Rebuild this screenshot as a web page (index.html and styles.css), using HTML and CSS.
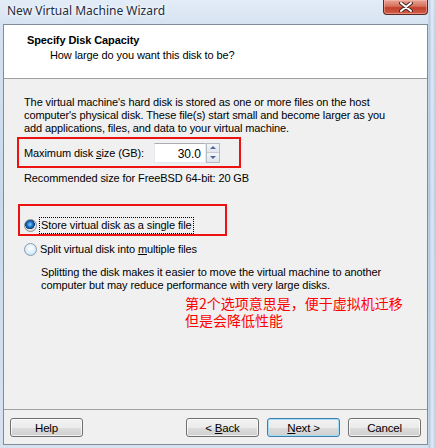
FILE: index.html
```html
<!DOCTYPE html>
<html>
<head>
  <meta name="viewport" content="width=device-width, initial-scale=1">
  <link rel="stylesheet" href="styles.css">
</head>
<body>

  <div class="window">
    <!-- Title bar -->
    <div class="titlebar">
      <span class="title">New Virtual Machine Wizard</span>
      <button class="close" aria-label="Close">
        <svg width="14" height="10" viewBox="0 0 14 10">
          <path d="M2 1 L12 9 M12 1 L2 9" stroke="#4a2a24" stroke-width="4" stroke-linecap="round"/>
          <path d="M2 1 L12 9 M12 1 L2 9" stroke="#ffffff" stroke-width="2" stroke-linecap="round"/>
        </svg>
      </button>
    </div>

    <!-- Dialog client area -->
    <div class="client">
      <div class="header">
        <h1>Specify Disk Capacity</h1>
        <p>How large do you want this disk to be?</p>
      </div>

      <div class="content">
        <p class="intro">The virtual machine's hard disk is stored as one or more files on the host<br>
          computer's physical disk. These file(s) start small and become larger as you<br>
          add applications, files, and data to your virtual machine.</p>

        <div class="mark mark-size">
          <div class="size-row">
            <span class="size-label">Maximum disk <u>s</u>ize (GB):</span>
            <div class="spin">
              <span class="spin-value">30.0</span>
              <span class="spin-btns">
                <span class="spin-btn up"></span>
                <span class="spin-btn down"></span>
              </span>
            </div>
          </div>
        </div>

        <p class="recommend">Recommended size for FreeBSD 64-bit: 20 GB</p>

        <div class="mark mark-radio">
          <label class="radio">
            <span class="dot checked"></span>
            <span class="focus">Store virtual disk as a single file</span>
          </label>
        </div>

        <label class="radio radio-split">
          <span class="dot"></span>
          <span>Split virtual disk into <u>m</u>ultiple files</span>
        </label>

        <p class="hint">Splitting the disk makes it easier to move the virtual machine to another<br>
          computer but may reduce performance with very large disks.</p>

        <p class="note">第2个选项意思是，便于虚拟机迁移<br>但是会降低性能</p>
      </div>

      <div class="footer">
        <button class="btn">Help</button>
        <span class="spacer"></span>
        <button class="btn">&lt; <u>B</u>ack</button>
        <button class="btn btn-default"><u>N</u>ext &gt;</button>
        <button class="btn">Cancel</button>
      </div>
    </div>
  </div>

</body>
</html>
```

FILE: styles.css
```css
/* =====================
   BASE
   ===================== */
body {
  margin: 0;
  width: 436px;
  height: 448px;
  overflow: hidden;
  background: #c8d8ea;
}
* {
  box-sizing: border-box;
}
p, h1 {
  margin: 0;
}
u {
  text-decoration: underline;
  text-underline-offset: 1px;
}

/* =====================
   WINDOW FRAME
   ===================== */
.window {
  width: 436px;
  height: 448px;
  padding: 0 8px 3px 3px;
  display: flex;
  flex-direction: column;
  background:
    linear-gradient(90deg, rgba(255,255,255,0) 0, rgba(255,255,255,0) 428px, rgba(150,175,205,0.55) 429px, rgba(230,238,248,0.7) 432px, rgba(170,190,215,0.6) 436px),
    linear-gradient(180deg, #e3ecf7 0, #d4e1f0 30px, #c9d9eb 200px, #d6e2ef 448px);
}

.titlebar {
  height: 24px;
  flex-shrink: 0;
  display: flex;
  align-items: flex-start;
  margin-right: -8px;
}
.title {
  font-family: "Noto Sans", "Open Sans", sans-serif;
  font-size: 12px;
  line-height: 17px;
  color: #1e2d3d;
  padding: 2px 0 0 4px;
  flex: 1;
  text-shadow: 0 0 6px #ffffff, 0 0 3px #ffffff;
}
.close {
  width: 45px;
  height: 15px;
  margin-right: 8px;
  padding: 0;
  border: 1px solid #5a2a22;
  border-top: none;
  border-radius: 0 0 4px 4px;
  background: linear-gradient(180deg, #e8a595 0, #d6705c 45%, #c2402a 55%, #d0604a 100%);
  box-shadow: inset 0 0 0 1px rgba(255,200,190,0.45);
  display: flex;
  align-items: center;
  justify-content: center;
}

/* =====================
   CLIENT AREA
   ===================== */
.client {
  flex: 1;
  display: flex;
  flex-direction: column;
  border: 1px solid #7f8c99;
  background: #f0f0f0;
  font-family: "Liberation Sans", Arial, sans-serif;
  font-size: 11px;
  letter-spacing: -0.1px;
  color: #000;
}

.header {
  height: 54px;
  flex-shrink: 0;
  background: #fff;
  border-bottom: 1px solid #a0a0a0;
  padding: 8px 0 0 23px;
}
.header h1 {
  font-size: 11px;
  font-weight: 700;
  line-height: 15px;
}
.header p {
  line-height: 15px;
  padding-left: 23px;
}

.content {
  flex: 1;
  padding: 17px 20px 0 20px;
}
.intro {
  line-height: 13px;
}

/* Red annotation boxes */
.mark {
  border: 2px solid #ee1111;
}
.mark-size {
  width: 224px;
  height: 31px;
  margin: 2px 0 0 -7px;
  padding-left: 5px;
  display: flex;
  align-items: center;
}
.size-row {
  display: flex;
  align-items: center;
}
.size-label {
  width: 130px;
}

/* Spin box */
.spin {
  display: flex;
  height: 20px;
}
.spin-value {
  width: 52px;
  height: 20px;
  background: #fff;
  border: 1px solid #e3e9ef;
  border-top-color: #abadb3;
  text-align: right;
  padding: 3px 4px 0 0;
  font-size: 12px;
  letter-spacing: 0;
}
.spin-btns {
  width: 14px;
  display: flex;
  flex-direction: column;
  border: 1px solid #b4bcc6;
  background: #e9eef4;
}
.spin-btn {
  flex: 1;
  display: flex;
  align-items: center;
  justify-content: center;
  background: linear-gradient(180deg, #f4f6f9, #dfe5ec);
}
.spin-btn.up {
  border-bottom: 1px solid #c3cad3;
}
.spin-btn::after {
  content: "";
  border-left: 3px solid transparent;
  border-right: 3px solid transparent;
}
.spin-btn.up::after {
  border-bottom: 3px solid #4d6a96;
}
.spin-btn.down::after {
  border-top: 3px solid #4d6a96;
}

.recommend {
  line-height: 13px;
  margin-top: 4px;
}

/* Radio buttons */
.mark-radio {
  width: 209px;
  height: 32px;
  margin: 19px 0 0 -6px;
  padding: 11px 0 0 4px;
}
.radio {
  display: flex;
  align-items: center;
  gap: 3px;
  height: 16px;
}
.radio-split {
  margin-top: 5px;
}
.dot {
  width: 13px;
  height: 13px;
  border-radius: 50%;
  border: 1px solid #8e9aa8;
  background: radial-gradient(circle at 50% 40%, #ffffff 0, #dff0fc 50%, #a9d3f2 100%);
  flex-shrink: 0;
}
.dot.checked {
  border-color: #8f8f8f;
  background:
    radial-gradient(circle at 45% 40%, #8fd0ff 0, #1e73c8 30%, #0a3f78 52%, transparent 56%),
    radial-gradient(circle, #f4f4f4 0, #d6d6d6 100%);
}
.focus {
  outline: 1px dotted #000;
  outline-offset: 0;
  padding: 0 1px;
  line-height: 15px;
}
.hint {
  line-height: 13px;
  margin: 9px 0 0 17px;
}
.note {
  font-family: "Noto Sans CJK SC", sans-serif;
  font-size: 14px;
  line-height: 17px;
  letter-spacing: 0;
  color: #ff0000;
  margin: 3px 0 0 161px;
}

/* =====================
   FOOTER BUTTONS
   ===================== */
.footer {
  height: 35px;
  flex-shrink: 0;
  border-top: 1px solid #a0a0a0;
  padding: 8px 6px 0 6px;
  display: flex;
  align-items: flex-start;
  gap: 8px;
}
.spacer {
  flex: 1;
}
.btn {
  width: 73px;
  height: 19px;
  padding: 0;
  font-family: "Liberation Sans", Arial, sans-serif;
  font-size: 11.5px;
  letter-spacing: -0.2px;
  color: #000;
  border: 1px solid #707070;
  border-radius: 3px;
  background: linear-gradient(180deg, #f2f2f2 0, #ebebeb 50%, #dddddd 51%, #cfcfcf 100%);
  box-shadow: inset 0 0 0 1px rgba(255,255,255,0.7);
}
.btn-default {
  border-color: #3c7fb1;
  box-shadow: inset 0 0 0 1px #a8dcf5;
}
```
